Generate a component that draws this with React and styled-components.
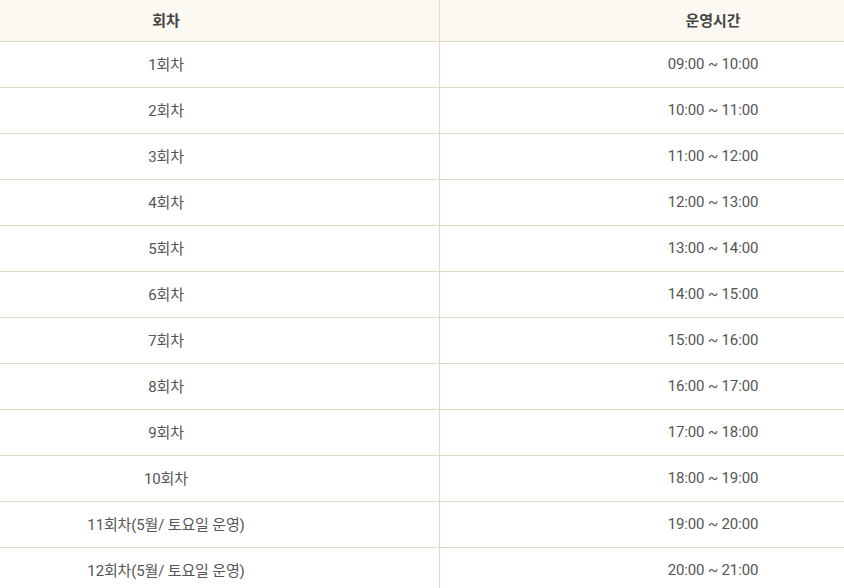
import React from 'react'
import styled, { createGlobalStyle } from 'styled-components'

const GlobalStyle = createGlobalStyle`
  html, body {
    margin: 0;
    padding: 0;
    background: #ffffff;
    overflow: hidden;
  }
`

const Wrap = styled.div`
  width: 844px;
  height: 588px;
  overflow: hidden;
`

const Table = styled.table`
  width: 1093px;
  margin-left: -107px;
  border-collapse: collapse;
  table-layout: fixed;
  font-family: Roboto, "Noto Sans CJK KR", sans-serif;
  font-size: 15px;
  color: #555555;
`

const Th = styled.th`
  height: 39px;
  padding: 0 0 2px;
  background: #fbf9f2;
  border-bottom: 1px solid #e3d9c7;
  border-left: ${p => (p.$first ? 'none' : '1px solid #e3d9c7')};
  font-weight: 700;
  color: #444444;
  text-align: center;
`

const Td = styled.td`
  height: 43px;
  padding: 0 0 2px;
  border-bottom: 1px solid #e3d9c7;
  border-left: ${p => (p.$first ? 'none' : '1px solid #e3d9c7')};
  text-align: center;
  letter-spacing: -0.15px;
`

const rows = [
  ['1회차', '09:00 ~ 10:00'],
  ['2회차', '10:00 ~ 11:00'],
  ['3회차', '11:00 ~ 12:00'],
  ['4회차', '12:00 ~ 13:00'],
  ['5회차', '13:00 ~ 14:00'],
  ['6회차', '14:00 ~ 15:00'],
  ['7회차', '15:00 ~ 16:00'],
  ['8회차', '16:00 ~ 17:00'],
  ['9회차', '17:00 ~ 18:00'],
  ['10회차', '18:00 ~ 19:00'],
  ['11회차(5월/ 토요일 운영)', '19:00 ~ 20:00'],
  ['12회차(5월/ 토요일 운영)', '20:00 ~ 21:00'],
]

const App = () => {
  return (
    <Wrap>
      <GlobalStyle />
      <Table>
        <thead>
          <tr>
            <Th $first>회차</Th>
            <Th>운영시간</Th>
          </tr>
        </thead>
        <tbody>
          {rows.map(([round, time]) => (
            <tr key={round}>
              <Td $first>{round}</Td>
              <Td>{time}</Td>
            </tr>
          ))}
        </tbody>
      </Table>
    </Wrap>
  )
}

export default App
